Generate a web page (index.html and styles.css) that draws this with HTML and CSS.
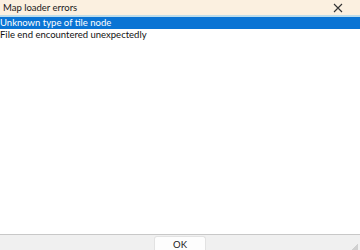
FILE: index.html
```html
<!DOCTYPE html>
<html lang="en">
<head>
    <meta charset="UTF-8">
    <title>Map loader errors</title>
    <link rel="stylesheet" href="styles.css">
</head>
<body>
    <div class="dialog">
        <div class="titlebar">
            <span class="title">Map loader errors</span>
            <span class="close">
                <svg width="10" height="10" viewBox="0 0 10 10"><path d="M1 1L9 9M9 1L1 9" stroke="#333" stroke-width="1.1"/></svg>
            </span>
        </div>
        <ul class="error-list">
            <li class="selected">Unknown type of tile node</li>
            <li>File end encountered unexpectedly</li>
        </ul>
        <div class="footer">
            <button class="ok-btn">OK</button>
            <span class="grip"></span>
        </div>
    </div>
</body>
</html>
```

FILE: styles.css
```css
body {
    margin: 0;
    padding: 0;
    font-family: 'Lato', 'Noto Sans', sans-serif;
    font-size: 9.5px;
    color: #111;
    background-color: #ffffff;
}

.dialog {
    display: flex;
    flex-direction: column;
    width: 360px;
    height: 250px;
}

.titlebar {
    display: flex;
    justify-content: space-between;
    align-items: center;
    height: 15px;
    padding: 0 17px 0 3px;
    background-color: #fbf0e0;
    border-bottom: 2px solid #bcdcea;
}

.title {
    color: #1a1a1a;
}

.close {
    display: flex;
}

.error-list {
    list-style-type: none;
    margin: 0;
    padding: 0;
    flex-grow: 1;
}

.error-list li {
    height: 12px;
    line-height: 12px;
    padding-left: 0;
}

.error-list li.selected {
    background-color: #0a74d4;
    color: #ffffff;
}

.footer {
    position: relative;
    display: flex;
    justify-content: center;
    height: 15px;
    border-top: 1px solid #c8c8c8;
    background-color: #f0f0f0;
}

.ok-btn {
    width: 52px;
    height: 15px;
    margin-top: 1px;
    padding: 0;
    font-family: inherit;
    font-size: 9.5px;
    color: #222;
    background-color: #fdfdfd;
    border: 1px solid #e2e2e2;
    border-bottom: none;
    border-radius: 3px 3px 0 0;
}

.grip {
    position: absolute;
    right: 2px;
    bottom: 0;
    width: 6px;
    height: 6px;
    background: linear-gradient(135deg, transparent 50%, #d0d0d0 50%);
}
```
